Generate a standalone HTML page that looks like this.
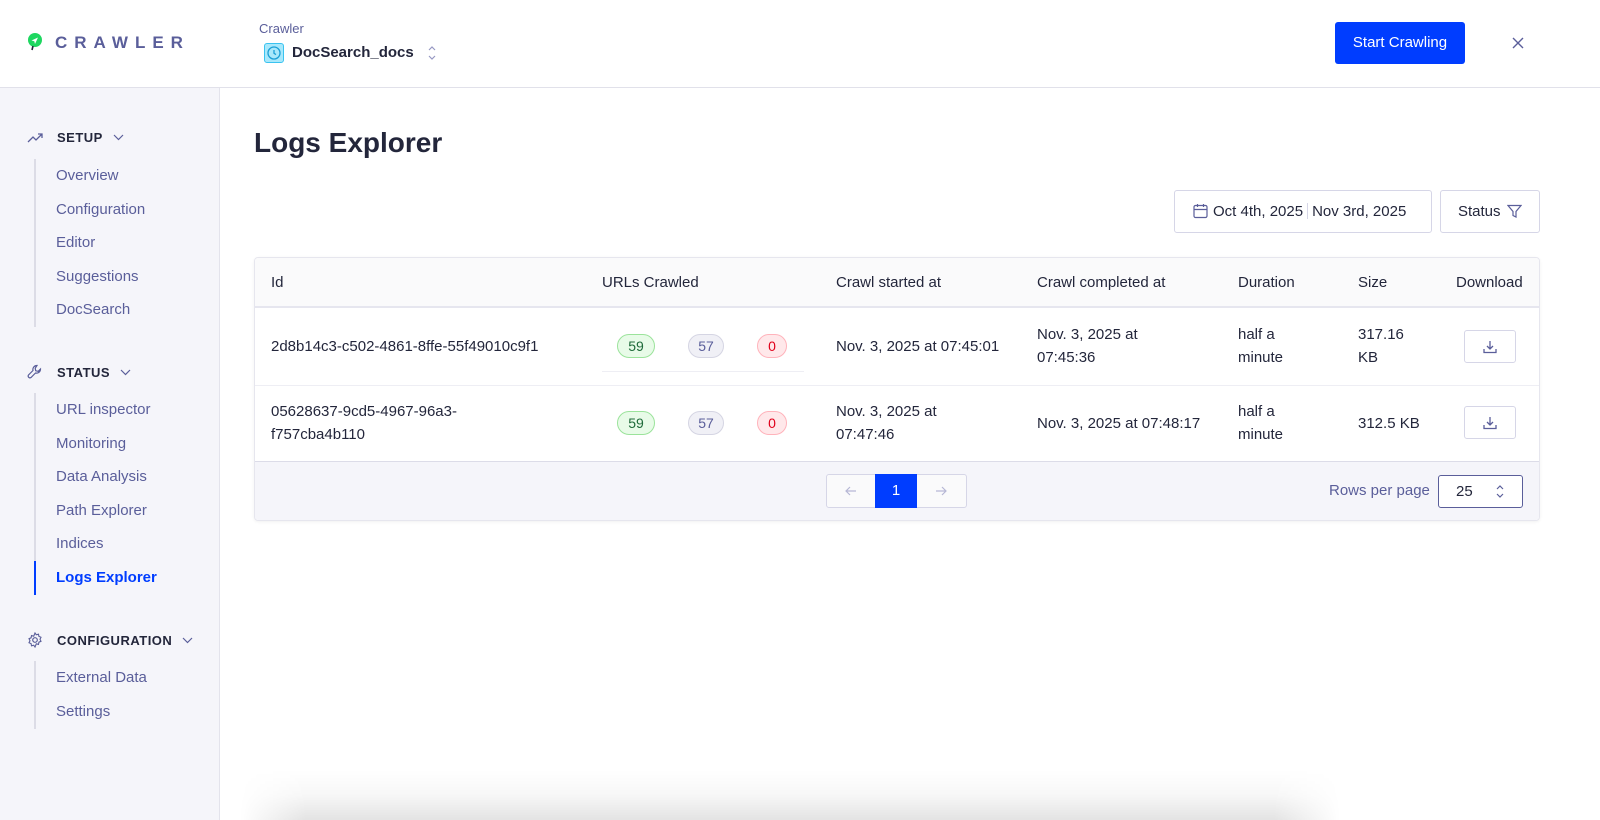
<!DOCTYPE html>
<html><head><meta charset="utf-8"><style>
*{box-sizing:border-box;margin:0;padding:0}
html,body{width:1600px;height:820px;overflow:hidden}
body{background:#fff;font-family:"Liberation Sans",sans-serif;color:#23263b}
#w{position:relative;width:1600px;height:820px;overflow:hidden}
.hdr{position:absolute;left:0;top:0;width:1600px;height:88px;border-bottom:1px solid #e1e1ea;background:#fff}
.side{position:absolute;left:0;top:88px;width:220px;height:732px;background:#f5f5fa;border-right:1px solid #e3e3ec}
.abs{position:absolute}
.sec{position:absolute;left:27px;font-size:13px;font-weight:bold;letter-spacing:.5px;color:#23263b;display:flex;align-items:center}
.sec svg{margin-right:14px}
.nav{position:absolute;left:34px;border-left:2px solid #dcdce6}
.nav div{padding-left:20px;height:33.6px;line-height:33.6px;font-size:15px;color:#5a5e9a}
.nav div.act{color:#003dff;font-weight:bold;border-left:2px solid #003dff;margin-left:-2px}
.tbl{position:absolute;left:254px;top:257px;width:1286px;height:264px;border:1px solid #e6e6ee;border-radius:4px;overflow:hidden;box-shadow:0 1px 3px rgba(0,0,0,.06)}
.t{position:absolute;font-size:15px;color:#23263b;line-height:23px}
.pill{position:absolute;height:24px;border-radius:12px;font-size:14px;line-height:22px;text-align:center}
.g{background:#e8fbe8;border:1px solid #9be39b;color:#1f6b3a;width:38px}
.n{background:#f0f0f6;border:1px solid #d5d5e3;color:#5a5e9a;width:36px}
.r{background:#ffe8ea;border:1px solid #ffb3bb;color:#e0001a;width:30px}
.dl{position:absolute;left:1464px;width:52px;height:33px;border:1px solid #d6d6e7;border-radius:3px;background:#fff;display:flex;align-items:center;justify-content:center}
</style></head><body><div id="w">
<div class="hdr">
  <svg class="abs" style="left:27px;top:33px" width="16" height="18" viewBox="0 0 16 18"><circle cx="8" cy="7" r="7" fill="#1ed760"/><path d="M4.5 7.5 11 4.5 8 11 7.3 8.2z" fill="#fff"/><path d="M6 13 5 17" stroke="#23263b" stroke-width="1.6"/></svg>
  <div class="abs" style="left:55px;top:33px;font-size:17px;letter-spacing:7px;color:#5a5e9a;font-weight:bold">CRAWLER</div>
  <div class="abs" style="left:259px;top:21px;font-size:13px;color:#5a5e9a">Crawler</div>
  <div class="abs" style="left:264px;top:43px;width:20px;height:20px;background:#a8e8fb;border:1px solid #3ac3f0;border-radius:3px"><svg width="18" height="18" viewBox="0 0 18 18"><circle cx="9" cy="9" r="6" fill="none" stroke="#1a9fd6" stroke-width="1.3"/><path d="M9 6v3.3l2 1.3" fill="none" stroke="#1a9fd6" stroke-width="1.3"/></svg></div>
  <div class="abs" style="left:292px;top:44px;font-size:15px;font-weight:bold;color:#23263b">DocSearch_docs</div>
  <svg class="abs" style="left:427px;top:44px" width="10" height="18" viewBox="0 0 10 18"><path d="M2 6l3-3 3 3M2 12l3 3 3-3" fill="none" stroke="#9698c3" stroke-width="1.2"/></svg>
  <div class="abs" style="left:1335px;top:22px;width:130px;height:42px;background:#003dff;border-radius:3px;color:#fff;font-size:15px;line-height:42px;text-align:center">Start Crawling</div>
  <svg class="abs" style="left:1511px;top:36px" width="14" height="14" viewBox="0 0 14 14"><path d="M2 2l10 10M12 2 2 12" stroke="#5a5e9a" stroke-width="1.4"/></svg>
</div>
<div class="side">
  <div class="sec" style="top:42px"><svg width="16" height="12" viewBox="0 0 16 12"><path d="M1 10l5-5 3 3 6-6M11 2h4v4" fill="none" stroke="#5a5e9a" stroke-width="1.3"/></svg>SETUP<svg style="margin-left:10px" width="11" height="7" viewBox="0 0 11 7"><path d="M1 1l4.5 4.5L10 1" fill="none" stroke="#5a5e9a" stroke-width="1.2"/></svg></div>
  <div class="nav" style="top:71px;height:168px"><div>Overview</div><div>Configuration</div><div>Editor</div><div>Suggestions</div><div>DocSearch</div></div>
  <div class="sec" style="top:276px"><svg width="16" height="16" viewBox="0 0 16 16"><path d="M10 1.5a4 4 0 0 0-4 5L1.5 11a1.8 1.8 0 0 0 2.5 2.5L8.5 9a4 4 0 0 0 5-4l-2.3 2.3-2.5-.5-.5-2.5z" fill="none" stroke="#5a5e9a" stroke-width="1.2"/></svg>STATUS<svg style="margin-left:10px" width="11" height="7" viewBox="0 0 11 7"><path d="M1 1l4.5 4.5L10 1" fill="none" stroke="#5a5e9a" stroke-width="1.2"/></svg></div>
  <div class="nav" style="top:305px;height:202px"><div>URL inspector</div><div>Monitoring</div><div>Data Analysis</div><div>Path Explorer</div><div>Indices</div><div class="act">Logs Explorer</div></div>
  <div class="sec" style="top:544px"><svg width="16" height="16" viewBox="0 0 16 16"><circle cx="8" cy="8" r="2.3" fill="none" stroke="#5a5e9a" stroke-width="1.2"/><path d="M8 1l1.3 1.8 2.2-.6.4 2.2 2.1.9-1 2 1 2-2.1.9-.4 2.2-2.2-.6L8 15l-1.3-1.8-2.2.6-.4-2.2-2.1-.9 1-2-1-2 2.1-.9.4-2.2 2.2.6z" fill="none" stroke="#5a5e9a" stroke-width="1.1"/></svg>CONFIGURATION<svg style="margin-left:10px" width="11" height="7" viewBox="0 0 11 7"><path d="M1 1l4.5 4.5L10 1" fill="none" stroke="#5a5e9a" stroke-width="1.2"/></svg></div>
  <div class="nav" style="top:573px;height:68px"><div>External Data</div><div>Settings</div></div>
</div>
<div class="abs" style="left:254px;top:127px;font-size:28px;font-weight:bold;color:#23263b">Logs Explorer</div>
<div class="abs" style="left:1174px;top:190px;width:258px;height:43px;border:1px solid #d6d6e7;border-radius:3px;font-size:15px;line-height:41px;padding-left:38px;color:#23263b">Oct 4th, 2025<span style="display:inline-block;width:1px;height:16px;background:#d6d6e7;margin:0 4px;vertical-align:-3px"></span>Nov 3rd, 2025
<svg class="abs" style="left:18px;top:12px" width="15" height="16" viewBox="0 0 15 16"><rect x="1" y="2.5" width="13" height="12" rx="1.5" fill="none" stroke="#5a5e9a" stroke-width="1.2"/><path d="M1 6.5h13M4.5 1v3M10.5 1v3" stroke="#5a5e9a" stroke-width="1.2"/></svg></div>
<div class="abs" style="left:1440px;top:190px;width:100px;height:43px;border:1px solid #d6d6e7;border-radius:3px;font-size:15px;line-height:41px;padding-left:17px">Status
<svg class="abs" style="left:66px;top:13px" width="15" height="15" viewBox="0 0 15 15"><path d="M1 1.5h13l-5 6v5.5l-3-1.5v-4z" fill="none" stroke="#5a5e9a" stroke-width="1.2"/></svg></div>
<div class="tbl">
  <div class="abs" style="left:0;top:0;width:100%;height:50px;background:#fafafb;border-bottom:2px solid #e6e6ef"></div>
  <div class="abs" style="left:0;top:127px;width:100%;height:1px;background:#eeeef4"></div>
  <div class="abs" style="left:347px;top:113px;width:202px;height:1px;background:#eeeef4"></div>
  <div class="abs" style="left:0;top:203px;width:100%;height:61px;background:#f5f5fa;border-top:1px solid #dcdce8"></div>
</div>
<div class="t" style="left:271px;top:271px">Id</div>
<div class="t" style="left:602px;top:271px">URLs Crawled</div>
<div class="t" style="left:836px;top:271px">Crawl started at</div>
<div class="t" style="left:1037px;top:271px">Crawl completed at</div>
<div class="t" style="left:1238px;top:271px">Duration</div>
<div class="t" style="left:1358px;top:271px">Size</div>
<div class="t" style="left:1456px;top:271px">Download</div>

<div class="t" style="left:271px;top:335px">2d8b14c3-c502-4861-8ffe-55f49010c9f1</div>
<div class="pill g" style="left:617px;top:334px">59</div><div class="pill n" style="left:688px;top:334px">57</div><div class="pill r" style="left:757px;top:334px">0</div>
<div class="t" style="left:836px;top:335px">Nov. 3, 2025 at 07:45:01</div>
<div class="t" style="left:1037px;top:323px">Nov. 3, 2025 at<br>07:45:36</div>
<div class="t" style="left:1238px;top:323px">half a<br>minute</div>
<div class="t" style="left:1358px;top:323px">317.16<br>KB</div>
<div class="dl" style="top:330px"><svg width="16" height="16" viewBox="0 0 16 16"><path d="M8 2v8M5 7l3 3 3-3M2 10v3.5h12V10" fill="none" stroke="#5a5e9a" stroke-width="1.3"/></svg></div>

<div class="t" style="left:271px;top:400px">05628637-9cd5-4967-96a3-<br>f757cba4b110</div>
<div class="pill g" style="left:617px;top:411px">59</div><div class="pill n" style="left:688px;top:411px">57</div><div class="pill r" style="left:757px;top:411px">0</div>
<div class="t" style="left:836px;top:400px">Nov. 3, 2025 at<br>07:47:46</div>
<div class="t" style="left:1037px;top:412px">Nov. 3, 2025 at 07:48:17</div>
<div class="t" style="left:1238px;top:400px">half a<br>minute</div>
<div class="t" style="left:1358px;top:412px">312.5 KB</div>
<div class="dl" style="top:406px"><svg width="16" height="16" viewBox="0 0 16 16"><path d="M8 2v8M5 7l3 3 3-3M2 10v3.5h12V10" fill="none" stroke="#5a5e9a" stroke-width="1.3"/></svg></div>

<div class="abs" style="left:826px;top:474px;width:141px;height:34px;border:1px solid #d6d6e7;border-radius:3px;background:#fafafb"></div>
<div class="abs" style="left:875px;top:474px;width:42px;height:34px;background:#003dff;color:#fff;font-size:15px;line-height:34px;text-align:center">1</div>
<svg class="abs" style="left:845px;top:485px" width="12" height="12" viewBox="0 0 12 12"><path d="M11 6H1M5 2 1 6l4 4" fill="none" stroke="#b6b7d5" stroke-width="1.2"/></svg>
<svg class="abs" style="left:935px;top:485px" width="12" height="12" viewBox="0 0 12 12"><path d="M1 6h10M7 2l4 4-4 4" fill="none" stroke="#b6b7d5" stroke-width="1.2"/></svg>
<div class="abs" style="left:1329px;top:482px;font-size:15px;color:#5a5e9a">Rows per page</div>
<div class="abs" style="left:1438px;top:475px;width:85px;height:33px;border:1px solid #5a5e9a;border-radius:3px;background:#fff;font-size:15px;line-height:31px;padding-left:17px">25
<svg class="abs" style="left:56px;top:7px" width="10" height="17" viewBox="0 0 10 17"><path d="M2 6l3-3 3 3M2 11l3 3 3-3" fill="none" stroke="#5a5e9a" stroke-width="1.2"/></svg></div>
<div class="abs" style="left:240px;top:770px;width:1100px;height:50px;background:linear-gradient(to bottom,rgba(0,0,0,0),rgba(0,0,0,.03) 50%,rgba(0,0,0,.11));-webkit-mask-image:linear-gradient(to right,transparent,#000 6%,#000 94%,transparent);mask-image:linear-gradient(to right,transparent,#000 6%,#000 94%,transparent)"></div>
</div></body></html>
